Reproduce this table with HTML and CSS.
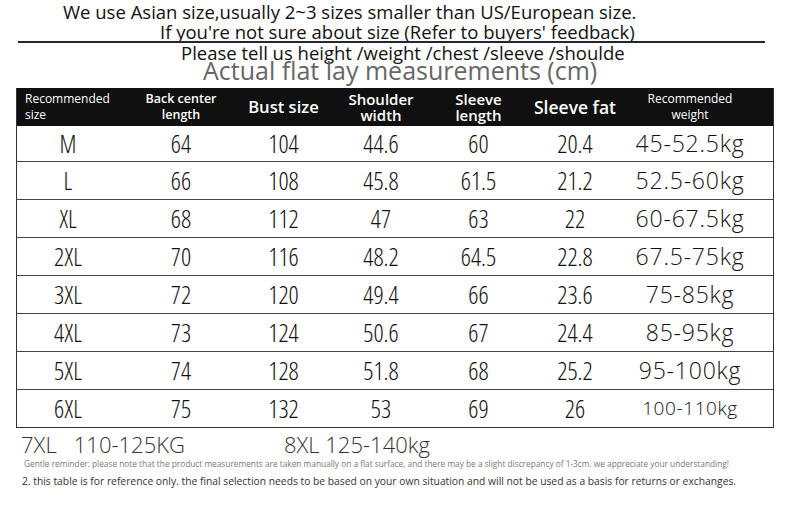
FILE: index.html
```html
<!DOCTYPE html>
<html>
<head>
<meta charset="utf-8">
<link rel="stylesheet" href="styles.css">
</head>
<body>
<div class="page">
  <div class="intro">
    <p class="l1">We use Asian size,usually 2~3 sizes smaller than US/European size.</p>
    <p class="l2">If you're not sure about size (Refer to buyers' feedback)</p>
    <div class="rule"></div>
    <p class="l3">Please tell us height /weight /chest /sleeve /shoulde</p>
    <p class="title">Actual flat lay measurements (cm)</p>
  </div>
  <div class="table">
    <div class="row head">
      <div class="c c1 h-sm">Recommended<br>size</div>
      <div class="c h-back">Back center<br>length</div>
      <div class="c h-bust">Bust size</div>
      <div class="c h-sh">Shoulder<br>width</div>
      <div class="c h-sl">Sleeve<br>length</div>
      <div class="c h-fat">Sleeve fat</div>
      <div class="c c7 h-sm">Recommended<br>weight</div>
    </div>
    <div class="row first"><div class="c c1">M</div><div class="c">64</div><div class="c">104</div><div class="c">44.6</div><div class="c">60</div><div class="c">20.4</div><div class="c c7 w">45-52.5kg</div></div>
    <div class="row"><div class="c c1">L</div><div class="c">66</div><div class="c">108</div><div class="c">45.8</div><div class="c">61.5</div><div class="c">21.2</div><div class="c c7 w">52.5-60kg</div></div>
    <div class="row"><div class="c c1">XL</div><div class="c">68</div><div class="c">112</div><div class="c">47</div><div class="c">63</div><div class="c">22</div><div class="c c7 w">60-67.5kg</div></div>
    <div class="row"><div class="c c1">2XL</div><div class="c">70</div><div class="c">116</div><div class="c">48.2</div><div class="c">64.5</div><div class="c">22.8</div><div class="c c7 w">67.5-75kg</div></div>
    <div class="row"><div class="c c1">3XL</div><div class="c">72</div><div class="c">120</div><div class="c">49.4</div><div class="c">66</div><div class="c">23.6</div><div class="c c7 w">75-85kg</div></div>
    <div class="row"><div class="c c1">4XL</div><div class="c">73</div><div class="c">124</div><div class="c">50.6</div><div class="c">67</div><div class="c">24.4</div><div class="c c7 w">85-95kg</div></div>
    <div class="row"><div class="c c1">5XL</div><div class="c">74</div><div class="c">128</div><div class="c">51.8</div><div class="c">68</div><div class="c">25.2</div><div class="c c7 w">95-100kg</div></div>
    <div class="row last"><div class="c c1">6XL</div><div class="c">75</div><div class="c">132</div><div class="c">53</div><div class="c">69</div><div class="c">26</div><div class="c c7 w sm">100-110kg</div></div>
  </div>
  <div class="extra"><span class="x1">7XL&nbsp;&nbsp;&nbsp;110-125KG</span><span class="x2">8XL 125-140kg</span></div>
  <p class="tiny">Gentle reminder: please note that the product measurements are taken manually on a flat surface, and there may be a slight discrepancy of 1-3cm. we appreciate your understanding!</p>
  <p class="note">2. this table is for reference only. the final selection needs to be based on your own situation and will not be used as a basis for returns or exchanges.</p>
</div>
</body>
</html>
```
FILE: styles.css
```css
html, body {
  margin: 0;
  padding: 0;
  background: #fff;
}
.page {
  width: 790px;
  height: 514px;
  overflow: hidden;
  font-family: "Open Sans", "Noto Sans", sans-serif;
  color: #111;
}
p { margin: 0; }
.intro {
  display: flex;
  flex-direction: column;
}
.l1, .l2, .l3 {
  font-size: 18.5px;
  font-stretch: 90%;
  white-space: nowrap;
}
.l1 {
  line-height: 22px;
  padding-left: 63px;
  padding-top: 1px;
}
.l2 {
  line-height: 18px;
  padding-left: 160px;
}
.rule {
  height: 2px;
  background: #23253a;
  margin: 0 25px 0 18px;
}
.l3 {
  line-height: 19px;
  padding-left: 181px;
}
.title {
  font-size: 25px;
  font-stretch: 90%;
  line-height: 20px;
  margin-top: -2px;
  padding-left: 203px;
  color: #666;
  white-space: nowrap;
}
.table {
  margin: 8px 0 0 16px;
  width: 756px;
  border: 1px solid #333;
  border-top: none;
}
.row {
  display: grid;
  grid-template-columns: 110px 108px 97px 98px 97px 96px 150px;
  height: 37px;
  align-items: center;
  border-bottom: 1px solid #444;
}
.row.first { height: 35px; }
.row.last { border-bottom: none; }
.row.head {
  background: #101010;
  color: #fff;
  height: 38px;
  border-bottom: none;
}
.c {
  text-align: center;
  font-size: 25px;
  font-weight: 300;
  font-stretch: 75%;
  line-height: 1;
}
.c1 { padding-right: 8px; }
.c7 { padding-right: 16px; }
.head .c { font-weight: 600; line-height: 16px; font-stretch: 92%; }
.head .c1 { text-align: left; padding-left: 8px; padding-right: 0; }
.head .h-sm { font-size: 12px; font-weight: 500; }
.head .h-back { font-size: 12.5px; }
.head .h-bust { font-size: 16.6px; }
.head .h-sh { font-size: 15px; }
.head .h-sl { font-size: 15px; }
.head .h-fat { font-size: 17.5px; }
.w {
  font-stretch: 100%;
  font-size: 23px;
  font-weight: 350;
  letter-spacing: 0.8px;
}
.w.sm { font-size: 19px; letter-spacing: 0.6px; }
.extra {
  display: flex;
  font-size: 22px;
  font-weight: 300;
  color: #333;
  padding: 4px 0 0 21px;
  line-height: 24px;
  white-space: nowrap;
}
.x2 { margin-left: 99px; }
.tiny {
  font-size: 8.3px;
  font-stretch: 92%;
  color: #777;
  padding: 2px 0 0 24px;
  line-height: 12px;
  white-space: nowrap;
}
.note {
  font-size: 10.3px;
  color: #333;
  padding: 4px 0 0 22px;
  line-height: 14px;
  white-space: nowrap;
}
```
